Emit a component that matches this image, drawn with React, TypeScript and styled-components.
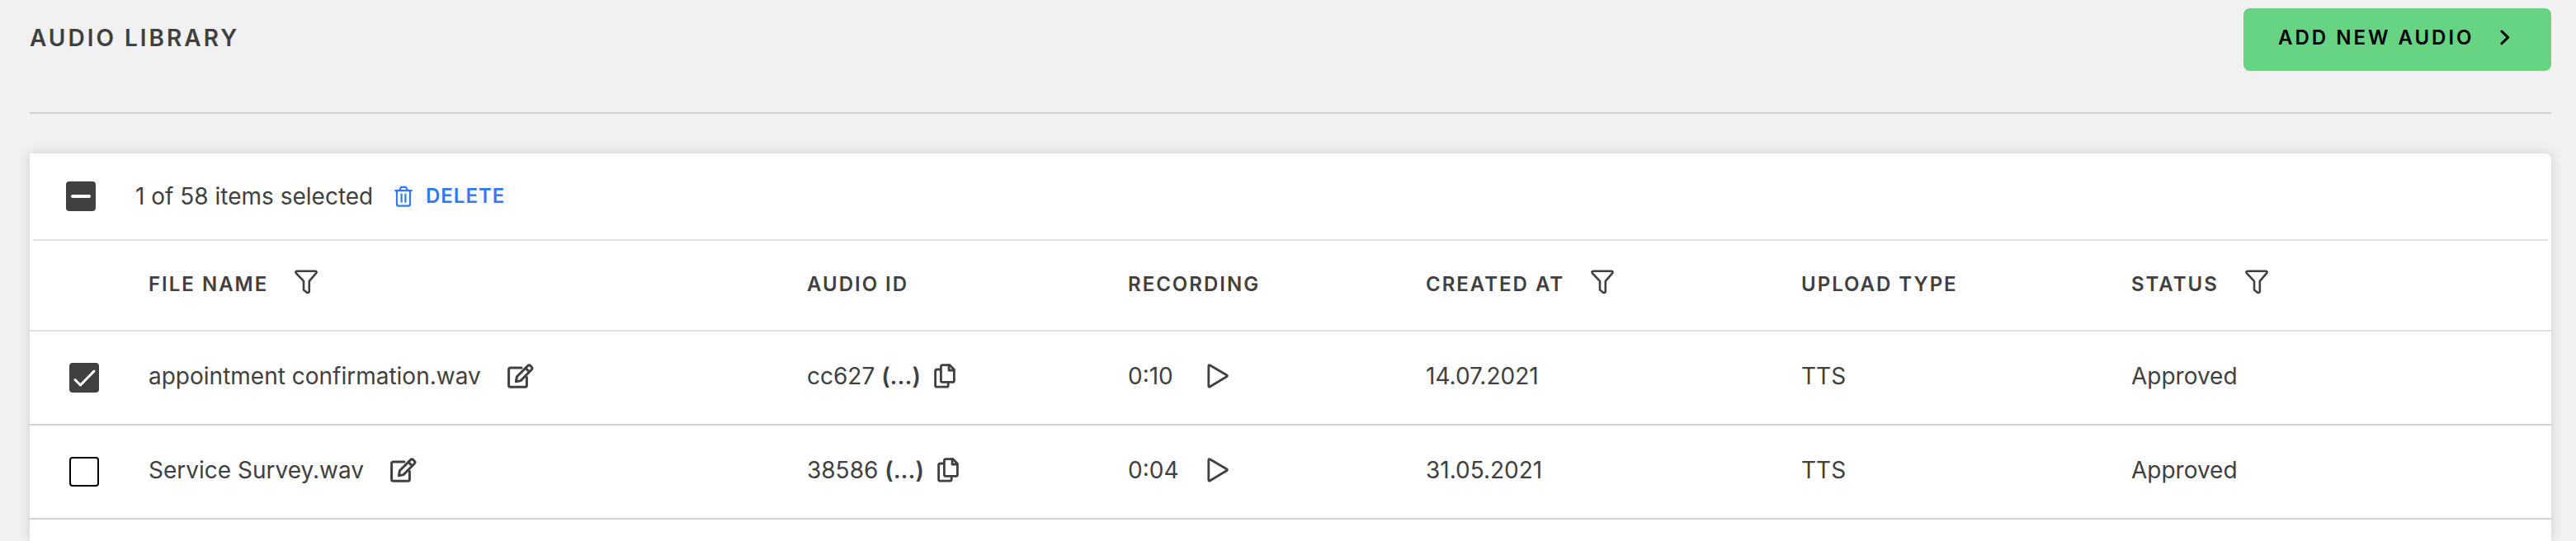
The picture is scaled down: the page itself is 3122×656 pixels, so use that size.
import React, { useState } from "react";
import type { ReactNode } from "react";
import styled, { createGlobalStyle } from "styled-components";

const Global = createGlobalStyle`
  *, *::before, *::after { box-sizing: border-box; }
  body {
    margin: 0;
    background: #f1f1f1;
    color: #404040;
    font-family: Inter, "Liberation Sans", sans-serif;
    font-size: 28px;
    line-height: 36px;
  }
  html, body, #root { min-height: 100vh; }
  #root { display: flex; flex-direction: column; }
`;

const Page = styled.main`
  flex: 1;
  display: flex;
  flex-direction: column;
  padding: 10px 30px 0 36px;
`;

const PageHeader = styled.header`
  display: flex;
  justify-content: space-between;
  align-items: flex-start;
  height: 128px;
  margin-bottom: 48px;
  border-bottom: 2px solid #ced4ce;
`;

const Title = styled.h1`
  margin: 18px 0 0;
  font-size: 28px;
  line-height: 36px;
  font-weight: 600;
  letter-spacing: 3px;
`;

const AddButton = styled.button`
  display: flex;
  align-items: center;
  justify-content: space-between;
  width: 373px;
  height: 76px;
  padding: 0 50px 4px 42px;
  border: 0;
  border-radius: 8px;
  background: #66d483;
  color: #000;
  font-family: inherit;
  font-size: 24px;
  line-height: 32px;
  font-weight: 600;
  letter-spacing: 3px;
  white-space: nowrap;
`;

const Card = styled.section`
  flex: 1;
  background: #fff;
  border-radius: 0 8px 0 0;
  box-shadow: 0 0 16px rgba(0, 0, 0, 0.14);
`;

const Toolbar = styled.div`
  display: flex;
  align-items: center;
  height: 106px;
  margin: 0 4px;
  padding: 0 40px;
  border-bottom: 2px solid #dee2e6;
`;

const Check = styled.input`
  appearance: none;
  display: block;
  width: 36px;
  height: 36px;
  margin: 0;
  border: 2px solid #000;
  border-radius: 4px;
  background: #fff;

  &:checked,
  &:indeterminate {
    border-color: #404040;
    background: #404040;
  }
`;

const CheckWrap = styled.label`
  display: grid;
  flex: none;
  width: 36px;
  height: 36px;

  > * { grid-area: 1 / 1; }
  > svg { pointer-events: none; z-index: 1; }
`;

const Selection = styled.span`
  min-width: 298px;
  margin: 0 16px 0 48px;
`;

const DeleteButton = styled.button`
  display: flex;
  align-items: center;
  gap: 16px;
  padding: 0;
  border: 0;
  background: none;
  color: #307af6;
  font-family: inherit;
  font-size: 24px;
  line-height: 36px;
  font-weight: 600;
  letter-spacing: 1px;
`;

const Table = styled.table`
  width: 100%;
  table-layout: fixed;
  border-collapse: separate;
  border-spacing: 0;
  text-align: left;
`;

const HeadCell = styled.th`
  height: 110px;
  padding: 0 0 2px;
  border-bottom: 2px solid #e1e1e1;
  font-size: 24px;
  line-height: 36px;
  font-weight: 600;
  letter-spacing: 2px;
  white-space: nowrap;
`;

const Cell = styled.td`
  height: 114px;
  padding: 0 0 4px;
  border-bottom: 2px solid #ced4ce;
  white-space: nowrap;
`;

const CheckCell = styled(Cell)`
  padding: 0 0 0 48px;
`;

const Line = styled.div<{ $gap?: number }>`
  display: flex;
  align-items: center;
  gap: ${(p) => p.$gap ?? 32}px;
`;

const Time = styled.span`
  width: 64px;
`;

const More = styled.span`
  font-weight: 600;
`;

const IconButton = styled.button`
  display: flex;
  padding: 0;
  border: 0;
  background: none;
  color: #404040;
`;

const FilterButton = styled(IconButton)`
  padding-bottom: 6px;
`;

type SvgProps = { w: number; h: number; sw?: number; children: ReactNode };

const Svg = ({ w, h, sw = 3, children }: SvgProps) => (
  <svg
    width={w}
    height={h}
    viewBox={`0 0 ${w} ${h}`}
    fill="none"
    stroke="currentColor"
    strokeWidth={sw}
    strokeLinejoin="round"
    strokeLinecap="round"
    aria-hidden="true"
  >
    {children}
  </svg>
);

const Funnel = () => (
  <Svg w={28} h={30} sw={2.6}>
    <path d="M2.6 1.8H25.4Q27.4 2.2 26 4.4L17.8 13.8V26.6Q17 28.6 15 27.8L11 24.6V13.8L2 4.4Q.6 2.2 2.6 1.8Z" />
  </Svg>
);
const Edit = () => (
  <Svg w={32} h={30}>
    <path d="M17 5H3.6Q1.6 5 1.6 7V26.2Q1.6 28.2 3.6 28.2H21.4Q23.4 28.2 23.4 26.2V16.4" />
    <path d="M10.4 21.8L11.4 15.8L24.6 2.6Q26.2 1 27.8 2.6L29.2 4Q30.8 5.6 29.2 7.2L16 20.6Z" />
    <path d="M22 5.4L26.4 9.8" />
  </Svg>
);
const Copy = () => (
  <Svg w={26} h={30} sw={2.8}>
    <path d="M8.4 3.6Q8.4 1.6 10.4 1.6H18.8L24.4 7.2V20.4Q24.4 22.4 22.4 22.4H10.4Q8.4 22.4 8.4 20.4Z" />
    <path d="M18 2V8H24" />
    <path d="M7.6 7H3.6Q1.6 7 1.6 9V26.2Q1.6 28.2 3.6 28.2H15.2Q17.2 28.2 17.2 26.2V23.4" />
  </Svg>
);
const Play = () => (
  <Svg w={26} h={30} sw={2.8}>
    <path d="M1.8 3Q1.8 1 3.6 2L23.6 13.8Q25.2 14.8 23.6 15.8L3.6 27.8Q1.8 28.8 1.8 26.8Z" />
  </Svg>
);
const Trash = () => (
  <Svg w={22} h={26} sw={2.2}>
    <path d="M1.2 6.2H20.8M3 6.4V22.8Q3 24.6 4.8 24.6H17.2Q19 24.6 19 22.8V6.4M6.2 5.6L8.2 1.8H13.8L15.8 5.6M8.6 10.6V19.8M13.4 10.6V19.8" />
  </Svg>
);
const Chevron = () => (
  <Svg w={12} h={20} sw={3}>
    <path d="M2 2L9.6 9.4L2 16.8" />
  </Svg>
);

const columns = [
  { name: "File name", width: 798, filter: true },
  { name: "Audio ID", width: 389 },
  { name: "Recording", width: 361 },
  { name: "Created at", width: 455, filter: true },
  { name: "Upload type", width: 400 },
  { name: "Status", width: 509, filter: true },
];
const CHECK_WIDTH = 144;
const TOTAL = columns.reduce((sum, c) => sum + c.width, CHECK_WIDTH);
const share = (width: number) => `${(width / TOTAL) * 100}%`;

const rows = [
  { file: "appointment confirmation.wav", id: "cc627", time: "0:10", date: "14.07.2021" },
  { file: "Service Survey.wav", id: "38586", time: "0:04", date: "31.05.2021" },
];
const ITEM_COUNT = 58;

export default function App() {
  const [selected, setSelected] = useState<string[]>(["cc627"]);
  const toggle = (id: string) =>
    setSelected((s) => (s.includes(id) ? s.filter((x) => x !== id) : [...s, id]));
  const partial = selected.length > 0;

  return (
    <>
      <Global />
      <Page>
        <PageHeader>
          <Title>AUDIO LIBRARY</Title>
          <AddButton type="button">
            ADD NEW AUDIO
            <Chevron />
          </AddButton>
        </PageHeader>
        <Card>
          <Toolbar>
            <CheckWrap>
              <Check
                type="checkbox"
                aria-label="Select all"
                checked={false}
                onChange={() => setSelected(partial ? [] : rows.map((r) => r.id))}
                ref={(el: HTMLInputElement | null) => {
                  if (el) el.indeterminate = partial;
                }}
              />
              {partial && (
                <Svg w={36} h={36} sw={4}>
                  <path d="M8 18H28" stroke="#fff" />
                </Svg>
              )}
            </CheckWrap>
            <Selection>
              {selected.length} of {ITEM_COUNT} items selected
            </Selection>
            <DeleteButton type="button">
              <Trash />
              DELETE
            </DeleteButton>
          </Toolbar>
          <Table>
            <colgroup>
              <col style={{ width: share(CHECK_WIDTH) }} />
              {columns.map((c) => (
                <col key={c.name} style={{ width: share(c.width) }} />
              ))}
            </colgroup>
            <thead>
              <tr>
                <HeadCell as="td" />
                {columns.map((c) => (
                  <HeadCell key={c.name} scope="col">
                    <Line>
                      {c.name.toUpperCase()}
                      {c.filter && (
                        <FilterButton type="button" aria-label={`Filter by ${c.name}`}>
                          <Funnel />
                        </FilterButton>
                      )}
                    </Line>
                  </HeadCell>
                ))}
              </tr>
            </thead>
            <tbody>
              {rows.map((r) => (
                <tr key={r.id}>
                  <CheckCell>
                    <CheckWrap>
                      <Check
                        type="checkbox"
                        checked={selected.includes(r.id)}
                        onChange={() => toggle(r.id)}
                        aria-label={`Select ${r.file}`}
                      />
                      {selected.includes(r.id) && (
                        <Svg w={36} h={36} sw={3}>
                          <path d="M7 20.5L13.5 27L30 10" stroke="#fff" />
                        </Svg>
                      )}
                    </CheckWrap>
                  </CheckCell>
                  <Cell>
                    <Line>
                      {r.file}
                      <IconButton type="button" aria-label={`Rename ${r.file}`}>
                        <Edit />
                      </IconButton>
                    </Line>
                  </Cell>
                  <Cell>
                    <Line $gap={16}>
                      <span>
                        {r.id} <More>(...)</More>
                      </span>
                      <IconButton type="button" aria-label={`Copy ID ${r.id}`}>
                        <Copy />
                      </IconButton>
                    </Line>
                  </Cell>
                  <Cell>
                    <Line>
                      <Time>{r.time}</Time>
                      <IconButton type="button" aria-label={`Play ${r.file}`}>
                        <Play />
                      </IconButton>
                    </Line>
                  </Cell>
                  <Cell>{r.date}</Cell>
                  <Cell>TTS</Cell>
                  <Cell>Approved</Cell>
                </tr>
              ))}
            </tbody>
          </Table>
        </Card>
      </Page>
    </>
  );
}
